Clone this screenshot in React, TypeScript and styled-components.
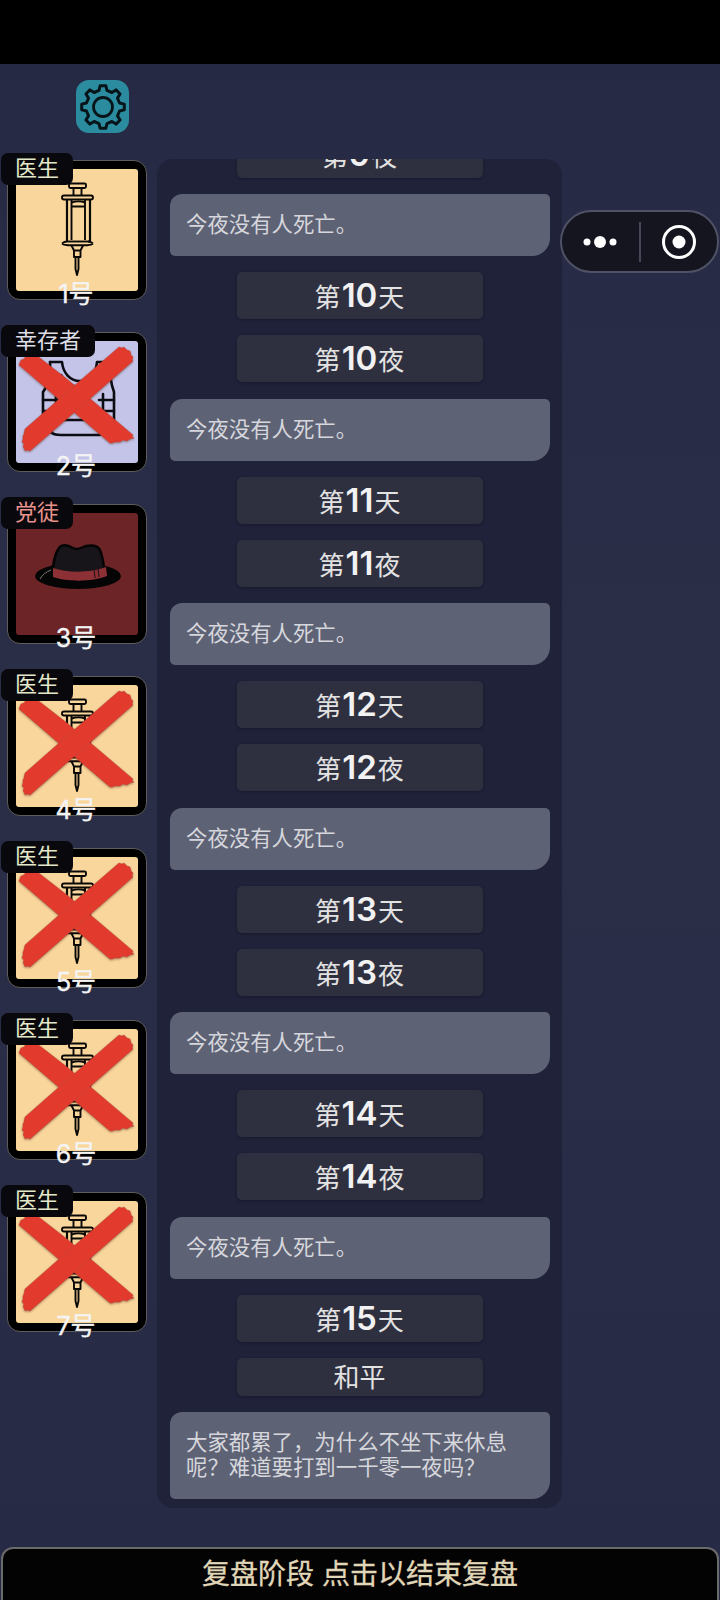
import { FC } from 'react'
import styled, { createGlobalStyle } from 'styled-components'

const GlobalStyle = createGlobalStyle`
  html, body {
    margin: 0;
    padding: 0;
    background: #282b45;
  }
  * { box-sizing: border-box; }
`

const cjk = `Inter, "Noto Sans CJK SC", sans-serif`

type Role = 'doctor' | 'survivor' | 'thug'

interface Player {
  no: number
  role: Role
  dead: boolean
}

const players: Player[] = [
  { no: 1, role: 'doctor', dead: false },
  { no: 2, role: 'survivor', dead: true },
  { no: 3, role: 'thug', dead: false },
  { no: 4, role: 'doctor', dead: true },
  { no: 5, role: 'doctor', dead: true },
  { no: 6, role: 'doctor', dead: true },
  { no: 7, role: 'doctor', dead: true },
]

const roleInfo: Record<Role, { name: string; bg: string; color: string }> = {
  doctor: { name: '医生', bg: '#f9d69c', color: '#e3e8c8' },
  survivor: { name: '幸存者', bg: '#c4c4e9', color: '#dedfe6' },
  thug: { name: '党徒', bg: '#6c2426', color: '#e8938c' },
}

const NIGHT_TEXT = '今夜没有人死亡。'
const days = [10, 11, 12, 13, 14]

// 8 toothed gear outline
const gearPath = (() => {
  const pts: string[] = []
  const teeth = 8
  for (let i = 0; i < teeth; i++) {
    const a = (i / teeth) * Math.PI * 2 - Math.PI / 2
    const step = (Math.PI * 2) / teeth
    const list: [number, number][] = [
      [17, a - step * 0.3],
      [21.5, a - step * 0.17],
      [21.5, a + step * 0.17],
      [17, a + step * 0.3],
    ]
    list.forEach(([r, t]) => {
      const x = 26 + r * Math.cos(t)
      const y = 26 + r * Math.sin(t)
      pts.push(`${x.toFixed(2)} ${y.toFixed(2)}`)
    })
  }
  return 'M' + pts.join('L') + 'Z'
})()

const SyringeIcon = () => (
  <svg width="60" height="105" viewBox="1.5 2 60 105" fill="none" stroke="#0a0806" strokeWidth="1.9" strokeLinejoin="round">
    <rect x="23.5" y="7.5" width="17" height="4.5" rx="1.5" />
    <path d="M28 12v7.5M36 12v7.5" />
    <rect x="16.5" y="19.5" width="31" height="4" rx="2" />
    <path d="M21.5 23.5V66M44.5 23.5V66" strokeWidth="2.2" />
    <path d="M26 24v40M39.5 24v40" />
    <path d="M26 26.5c4-1.2 10-1.2 13.5 0M26 30.5h13.5" />
    <path d="M21.5 65.5h23" />
    <path d="M16.5 67.5c2-1.6 4-2 5-2M47.5 67.5c-2-1.6-4-2-5-2M16.5 67.5c2 1.6 6 1.8 9 1.8h13c3 0 7-.2 9-1.8" />
    <path d="M26 69.5l2.5 5v6.5h6.5v-6.5l2.5-5M28.5 74.5h6.5" />
    <path d="M30 81v12l1.5 6 1.5-6V81" />
  </svg>
)

const VestIcon = () => (
  <svg width="120" height="110" viewBox="-4 2 120 110" fill="none" stroke="#0b0b12" strokeWidth="2.6" strokeLinejoin="round" strokeLinecap="round">
    <path d="M29 17h12c1 11 8 19 18 19s16-8 17-19h13" />
    <path d="M29 17c1 9-1 22-7 30v37c0 3 4 4 9 3" />
    <path d="M89 17c-1 9 1 22 4 30v37c0 3-3 4-9 3" />
    <path d="M40 30c5 9 12 12 19 12s13-3 19-12" />
    <path d="M22 55h16M22 66h16M78 55h15M78 66h15M35 49v24M82 49v24" />
    <path d="M30 87c2 3 6 3 10 3h36c3 0 6-1 8-3" />
    <path d="M35 75h46" />
  </svg>
)

const HatIcon = () => (
  <svg width="110" height="70" viewBox="-4 4 110 70">
    <ellipse cx="52" cy="41" rx="43" ry="13" fill="#060506" />
    <path d="M26 41c1-10 2-21 7-28 3-4 9-3 13-.5 3 2 6 2 10 0 5-2.500 14-3 17 1 4 6 5 18 6 28 -14 5 -39 5 -53 -.5z" fill="#17141a" stroke="#060506" strokeWidth="2.500" />
    <path d="M27 33c14 5 38 5 53 -1l1 9c-14 6 -40 6 -54 1z" fill="#8c3036" />
    <path d="M68 34l1 9M72 33l1 9" stroke="#2a1518" strokeWidth="1.200" />
    <path d="M14 44c2-4 6-7 11-9" stroke="#7a7676" strokeWidth="1" fill="none" />
  </svg>
)

const CrossMark = () => (
  <CrossSvg viewBox="0 0 138 138">
    <g fill="#e23a2d" stroke="#b8463a" strokeWidth="0.5">
      <path d="M12 33l2-5 3-1 2-3 4-3 1-2L60 47 126 103l-1 2 2 1-4 1-3 2-4-1-3 2-5 0-3 1-2 0L55 70z" />
      <path d="M18 97L60 60 112 15l3 1 2-1 3 3 3 1 1 4 2 2-1 3 1 1L70 78 23 119l-3-1-2 1-1-3-1-1 1-3-2-2 1-3 0-3 1-2z" />
    </g>
  </CrossSvg>
)

const PlayerCard: FC<{ player: Player }> = ({ player }) => {
  const info = roleInfo[player.role]
  return (
    <Card>
      <Art $bg={info.bg}>
        {player.role === 'doctor' && <SyringeIcon />}
        {player.role === 'survivor' && <VestIcon />}
        {player.role === 'thug' && <HatIcon />}
      </Art>
      {player.dead && <CrossMark />}
      <RoleTag $color={info.color}>{info.name}</RoleTag>
      <SeatNo>{player.no}号</SeatNo>
    </Card>
  )
}

const DayButton: FC<{ n: number; word: string }> = ({ n, word }) => (
  <PhaseButton>
    第<Digits>{n}</Digits>{word}
  </PhaseButton>
)

export default function App() {
  return (
    <Page>
      <GlobalStyle />
      <StatusBand />
      <GearTile>
        <svg width="52" height="52" viewBox="0 0 52 52" fill="none" stroke="#07141a">
          <path d={gearPath} strokeWidth="3" strokeLinejoin="round" />
          <circle cx="26" cy="26" r="9.5" strokeWidth="2.800" />
        </svg>
      </GearTile>
      <Main>
        <Sidebar>
          {players.map((p) => (
            <PlayerCard key={p.no} player={p} />
          ))}
        </Sidebar>
        <LogPanel>
          <LogList>
            <DayButton n={9} word="夜" />
            <Bubble>{NIGHT_TEXT}</Bubble>
            {days.map((d) => (
              <DayGroup key={d}>
                <DayButton n={d} word="天" />
                <DayButton n={d} word="夜" />
                <Bubble>{NIGHT_TEXT}</Bubble>
              </DayGroup>
            ))}
            <DayButton n={15} word="天" />
            <PeaceButton>和平</PeaceButton>
            <Bubble>大家都累了，为什么不坐下来休息呢？难道要打到一千零一夜吗？</Bubble>
          </LogList>
        </LogPanel>
      </Main>
      <Capsule>
        <CapsuleHalf>
          <svg width="44" height="14" viewBox="0 0 44 14" fill="#fff">
            <circle cx="9" cy="7" r="3.500" />
            <circle cx="22" cy="7" r="6" />
            <circle cx="35" cy="7" r="3.500" />
          </svg>
        </CapsuleHalf>
        <CapsuleDivider />
        <CapsuleHalf>
          <svg width="36" height="36" viewBox="0 0 36 36">
            <circle cx="18" cy="18" r="15.500" fill="none" stroke="#fff" strokeWidth="3" />
            <circle cx="18" cy="18" r="6.500" fill="#fff" />
          </svg>
        </CapsuleHalf>
      </Capsule>
      <EndBar>复盘阶段 点击以结束复盘</EndBar>
    </Page>
  )
}

const Page = styled.div`
  position: relative;
  width: 720px;
  height: 1600px;
  display: flex;
  flex-direction: column;
  overflow: hidden;
  background: linear-gradient(180deg, #262944 0%, #2b2e47 45%, #272a45 100%);
  font-family: ${cjk};
`

const StatusBand = styled.div`
  height: 64px;
  background: #000;
  flex: none;
`

const GearTile = styled.div`
  width: 53px;
  height: 53px;
  margin: 16px 0 0 76px;
  border-radius: 13px;
  background: #2b8c9f;
  display: flex;
  align-items: center;
  justify-content: center;
  flex: none;
`

const Main = styled.div`
  display: flex;
  margin-top: 26px;
  flex: none;
`

const Sidebar = styled.div`
  width: 157px;
  padding: 1px 0 0 7px;
  display: flex;
  flex-direction: column;
  gap: 32px;
`

const Card = styled.div`
  position: relative;
  width: 140px;
  height: 140px;
  padding: 8px;
  background: #000;
  border: 1px solid #5e5c5c;
  border-radius: 13px;
`

const Art = styled.div<{ $bg: string }>`
  width: 100%;
  height: 100%;
  border-radius: 3px;
  background: ${(p) => p.$bg};
  display: flex;
  align-items: center;
  justify-content: center;
  overflow: visible;
`

const CrossSvg = styled.svg`
  position: absolute;
  left: -1px;
  top: -1px;
  width: 138px;
  height: 138px;
  filter: drop-shadow(0 1px 1px rgba(80, 30, 10, 0.45));
`

const RoleTag = styled.div<{ $color: string }>`
  position: absolute;
  left: -7px;
  top: -8px;
  height: 32px;
  padding: 0 14px;
  border-radius: 7px;
  background: #08080d;
  color: ${(p) => p.$color};
  font-size: 22px;
  line-height: 30px;
`

const SeatNo = styled.div`
  position: absolute;
  left: 0;
  right: 2px;
  bottom: -7px;
  text-align: center;
  color: #f4f4f4;
  font-size: 25px;
  line-height: 24px;
  -webkit-text-stroke: 0.4px #f4f4f4;
`

const LogPanel = styled.div`
  width: 405px;
  height: 1349px;
  padding: 0 13px;
  border-radius: 16px;
  background: #20223a;
  overflow: hidden;
`

const LogList = styled.div`
  margin-top: -28px;
  display: flex;
  flex-direction: column;
  align-items: center;
  gap: 16.3px;
`

const DayGroup = styled.div`
  display: contents;
`

const Bubble = styled.div`
  width: 380px;
  padding: 18px 36px 19px 16.5px;
  border-radius: 12px 5px 18px 5px;
  background: #5e6275;
  color: #d6d7dc;
  font-size: 21.4px;
  line-height: 25px;
`

const PhaseButton = styled.div`
  width: 246px;
  height: 46.800px;
  border-radius: 5px;
  background: #2f303f;
  box-shadow: 0 1px 3px rgba(10, 10, 20, 0.35);
  color: #e2e2e2;
  font-size: 26px;
  line-height: 46px;
  text-align: center;
`

const PeaceButton = styled(PhaseButton)`
  height: 38px;
  line-height: 39px;
`

const Digits = styled.span`
  font-size: 33px;
  font-weight: 600;
  color: #f2f2f2;
  margin: 0 1px;
`

const Capsule = styled.div`
  position: absolute;
  left: 560px;
  top: 210px;
  width: 159px;
  height: 63px;
  display: flex;
  align-items: center;
  border-radius: 32px;
  background: #14151f;
  border: 2px solid #4f5165;
`

const CapsuleHalf = styled.div`
  flex: 1;
  display: flex;
  align-items: center;
  justify-content: center;
`

const CapsuleDivider = styled.div`
  width: 2px;
  height: 40px;
  background: #46485a;
`

const EndBar = styled.div`
  margin: auto 1px 0;
  height: 53px;
  border: 2px solid #6a6a6a;
  border-bottom: none;
  border-radius: 12px 12px 0 0;
  background: #030303;
  color: #e0d6b8;
  font-size: 28px;
  -webkit-text-stroke: 0.3px #e0d6b8;
  line-height: 50px;
  text-align: center;
  flex: none;
`
